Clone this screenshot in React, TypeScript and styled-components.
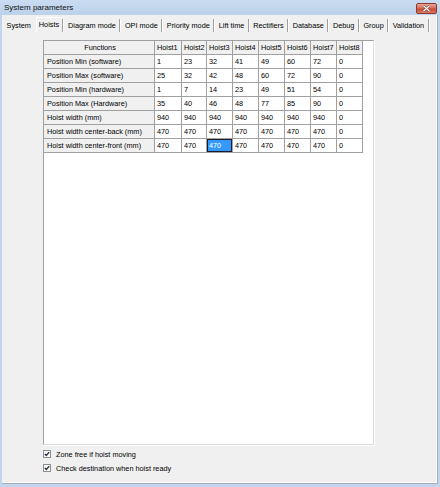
import React, { Fragment } from 'react';
import styled, { createGlobalStyle, css } from 'styled-components';

const Global = createGlobalStyle`
  html, body { margin: 0; padding: 0; }
  body {
    width: 440px;
    height: 487px;
    overflow: hidden;
    font-family: "Liberation Sans", Arial, sans-serif;
    color: #000;
  }
`;

const Window = styled.div`
  width: 440px;
  height: 487px;
  box-sizing: border-box;
  display: flex;
  flex-direction: column;
  background: #c2d5ec;
`;

const TitleBar = styled.div`
  height: 15px;
  flex: none;
  display: flex;
  align-items: flex-start;
  background: linear-gradient(to bottom, #cadcf1, #bcd1ea);
`;

const Title = styled.div`
  padding-left: 4px;
  line-height: 15px;
  font-size: 8px;
  color: #111;
`;

const CloseButton = styled.div`
  margin-left: auto;
  margin-top: 3px;
  margin-right: 3px;
  width: 21px;
  height: 11px;
  box-sizing: border-box;
  border: 1px solid #8d3a2f;
  border-radius: 2px;
  background: linear-gradient(to bottom, #eaa597 0%, #d86e5c 45%, #c44a35 55%, #d97a63 100%);
  display: flex;
  align-items: center;
  justify-content: center;
`;

const Frame = styled.div`
  flex: 1;
  display: flex;
  padding: 0 2px 3px 2px;
  min-height: 0;
`;

const Client = styled.div`
  flex: 1;
  display: flex;
  flex-direction: column;
  background: #f0f0f0;
  border-right: 1px solid #a3afbd;
  border-bottom: 1px solid #a3afbd;
  box-shadow: inset -1px -1px 0 #fbfbfb;
`;

const TabStrip = styled.div`
  display: flex;
  margin-top: 3px;
  height: 14px;
  padding-left: 1px;
`;

const Tab = styled.div<{ $selected?: boolean }>`
  display: flex;
  align-items: center;
  padding: 0 3.4px 0 3.6px;
  font-size: 7.3px;
  white-space: nowrap;
  ${(p) =>
    p.$selected &&
    css`
      margin-left: 1.5px;
      margin-top: -1px;
      padding-left: 2px;
      border-top: 1px solid #fff;
      border-left: 1px solid #fff;
      padding-bottom: 2px;
    `}
`;

const Separator = styled.div`
  width: 1px;
  margin: 1px 1px 0 0;
  background: #a0a0a0;
  box-shadow: 1px 0 0 #fff;
`;

const GridBox = styled.div`
  margin: 8px 0 0 41px;
  width: 331px;
  height: 405px;
  box-sizing: border-box;
  background: #fff;
  border: 1px solid;
  border-color: #a0a0a0 #dcdcdc #dcdcdc #a0a0a0;
  box-shadow: 1px 1px 0 #fff;
`;

const Grid = styled.div`
  display: grid;
  grid-template-columns: 111px 27px 25px repeat(6, 26px);
  grid-auto-rows: 14px;
`;

const cellBase = css`
  box-sizing: border-box;
  height: 14px;
  border-right: 1px solid #a0a0a0;
  border-bottom: 1px solid #a0a0a0;
  font-size: 7.3px;
  line-height: 13px;
  white-space: nowrap;
  overflow: hidden;
`;

const HeaderCell = styled.div<{ $center?: boolean }>`
  ${cellBase};
  background: #f0f0f0;
  padding-left: 2px;
  text-align: ${(p) => (p.$center ? 'center' : 'left')};
`;

const RowHeader = styled.div`
  ${cellBase};
  background: #f0f0f0;
  padding-left: 3px;
`;

const Cell = styled.div<{ $selected?: boolean }>`
  ${cellBase};
  background: #fff;
  padding-left: 2px;
  ${(p) =>
    p.$selected &&
    css`
      background: #3399ff;
      color: #fff;
      box-shadow: inset 0 0 0 1px #1b1b2b;
    `}
`;

const CheckList = styled.div`
  margin: 2px 0 0 41px;
  display: flex;
  flex-direction: column;
`;

const CheckRow = styled.label`
  height: 14px;
  display: flex;
  align-items: center;
  gap: 5px;
  font-size: 7.3px;
  white-space: nowrap;
`;

const CheckBox = styled.span`
  width: 8px;
  height: 8px;
  flex: none;
  display: block;
`;

const tabs = [
  'System',
  'Hoists',
  'Diagram mode',
  'OPI mode',
  'Priority mode',
  'Lift time',
  'Rectifiers',
  'Database',
  'Debug',
  'Group',
  'Validation',
];

const headers = ['Hoist1', 'Hoist2', 'Hoist3', 'Hoist4', 'Hoist5', 'Hoist6', 'Hoist7', 'Hoist8'];

const rows: { label: string; values: string[] }[] = [
  { label: 'Position Min (software)', values: ['1', '23', '32', '41', '49', '60', '72', '0'] },
  { label: 'Position Max (software)', values: ['25', '32', '42', '48', '60', '72', '90', '0'] },
  { label: 'Position Min (hardware)', values: ['1', '7', '14', '23', '49', '51', '54', '0'] },
  { label: 'Position Max (Hardware)', values: ['35', '40', '46', '48', '77', '85', '90', '0'] },
  { label: 'Hoist width (mm)', values: ['940', '940', '940', '940', '940', '940', '940', '0'] },
  { label: 'Hoist width center-back (mm)', values: ['470', '470', '470', '470', '470', '470', '470', '0'] },
  { label: 'Hoist width center-front (mm)', values: ['470', '470', '470', '470', '470', '470', '470', '0'] },
];

const Check = () => (
  <CheckBox>
    <svg width="8" height="8" viewBox="0 0 8 8">
      <rect x="0.5" y="0.5" width="7" height="7" fill="#fbfbfb" stroke="#8e8f8f" />
      <polyline points="1.8,3.9 3.3,5.5 6.2,2.1" fill="none" stroke="#1e2a3c" strokeWidth="1.3" />
    </svg>
  </CheckBox>
);

export default function App() {
  return (
    <>
      <Global />
      <Window>
        <TitleBar>
          <Title>System parameters</Title>
          <CloseButton>
            <svg width="9" height="7" viewBox="0 0 9 7">
              <path d="M1.5 0.8 L7.5 6.2 M7.5 0.8 L1.5 6.2" stroke="#6b2a20" strokeWidth="2.2" />
              <path d="M1.5 0.8 L7.5 6.2 M7.5 0.8 L1.5 6.2" stroke="#fff" strokeWidth="1.3" />
            </svg>
          </CloseButton>
        </TitleBar>
        <Frame>
          <Client>
            <TabStrip>
              {tabs.map((t, i) => (
                <Fragment key={t}>
                  <Tab $selected={t === 'Hoists'}>{t}</Tab>
                  {i > 0 && <Separator />}
                </Fragment>
              ))}
            </TabStrip>
            <GridBox>
              <Grid>
                <HeaderCell $center>Functions</HeaderCell>
                {headers.map((h) => (
                  <HeaderCell key={h}>{h}</HeaderCell>
                ))}
                {rows.map((r, ri) => (
                  <Fragment key={r.label}>
                    <RowHeader>{r.label}</RowHeader>
                    {r.values.map((v, ci) => (
                      <Cell key={ci} $selected={ri === 6 && ci === 2}>
                        {v}
                      </Cell>
                    ))}
                  </Fragment>
                ))}
              </Grid>
            </GridBox>
            <CheckList>
              <CheckRow>
                <Check />
                Zone free if hoist moving
              </CheckRow>
              <CheckRow>
                <Check />
                Check destination when hoist ready
              </CheckRow>
            </CheckList>
          </Client>
        </Frame>
      </Window>
    </>
  );
}
